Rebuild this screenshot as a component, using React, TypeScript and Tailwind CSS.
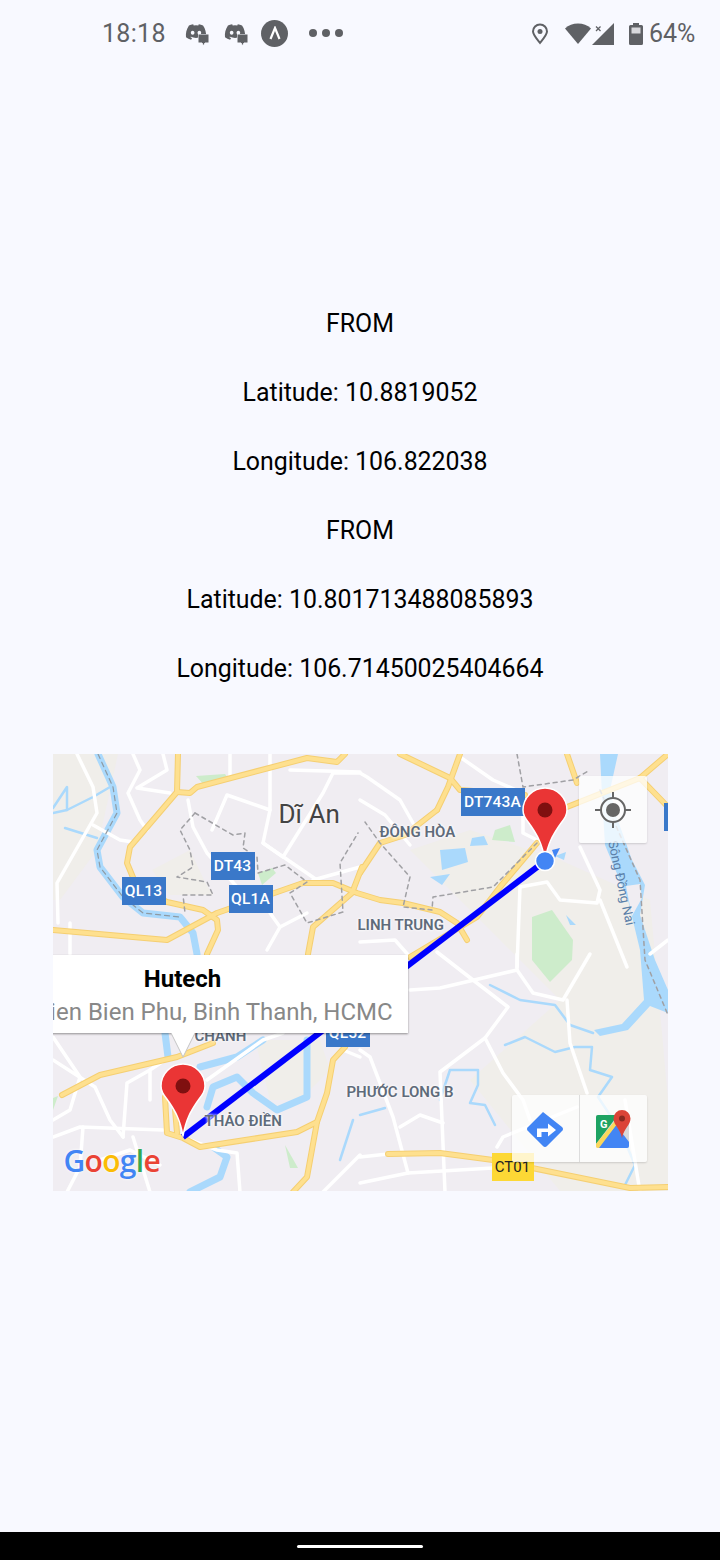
import { FaDiscord } from "react-icons/fa";

const lines = [
  "FROM",
  "Latitude: 10.8819052",
  "Longitude: 106.822038",
  "FROM",
  "Latitude: 10.801713488085893",
  "Longitude: 106.71450025404664",
];

// all map drawing uses page coordinates through the viewBox
const yellowRoads = [
  "178,754 177,792 130,847 127,863 137,887 167,902 203,910 217,920 218,930 207,954",
  "177,792 190,793 197,787 307,758 337,762 345,754",
  "53,930 167,940 217,913 303,883 333,883 357,893 380,900 403,903 440,912 457,923 467,940",
  "362,867 352,893 313,927 308,954",
  "400,754 450,778 460,790 525,795",
  "460,754 448,787 437,810",
  "360,873 380,843 405,835 437,810",
  "537,843 500,887 477,917 410,957",
  "567,754 577,783",
  "567,807 640,778 668,754",
  "640,778 668,807",
  "62,1095 100,1075 177,1057 213,1043",
  "165,1097 167,1133 183,1138 200,1147 297,1132 317,1122 327,1093 333,1060 345,1047",
  "174,1097 177,1133",
  "317,1122 307,1177 293,1192",
  "388,1154 440,1153 493,1160 630,1188 668,1187",
];

const whiteRoads = [
  "77,754 93,787 97,813 57,883 58,923",
  "93,825 120,840 133,842",
  "133,754 140,770 128,793 140,820 147,830",
  "163,754 167,770 137,788 170,793",
  "188,800 193,827 207,853 237,887",
  "212,830 227,795 270,810 270,754",
  "230,754 230,777",
  "270,810 263,843 317,880",
  "263,843 283,857 323,793 333,773 360,773 367,777 400,800 413,823",
  "290,770 360,772",
  "270,913 280,927 267,950",
  "280,927 307,913",
  "360,867 313,880",
  "70,923 70,954",
  "460,757 493,780 523,793 523,833 537,840",
  "517,967 520,887 547,882 560,900 597,903 600,890 580,847",
  "600,900 627,967",
  "360,942 395,940 410,957",
  "360,800 385,815 410,845",
  "437,952 473,980 508,1007 485,1038 440,1072 445,1192",
  "410,990 440,988 517,970 517,954",
  "517,970 533,993 563,1000 590,954",
  "567,1000 570,1043 587,1093",
  "485,1038 503,1073 523,1100 530,1120",
  "497,1147 503,1137 577,1107",
  "360,1157 388,1154",
  "360,1050 370,1057 393,1117 408,1173 493,1168",
  "400,1127 420,1115 443,1123",
  "408,1173 360,1183",
  "53,1037 80,1077 70,1110 53,1120",
  "53,1137 80,1127 163,1130",
  "53,1060 95,1087 110,1120 123,1137",
  "123,1137 127,1083 150,1070",
  "133,1137 150,1192",
  "67,1192 80,1167 83,1127",
  "100,1160 130,1150 160,1165",
  "150,1100 150,1070 165,1060",
  "190,1140 217,1150 237,1153 240,1192",
  "207,1080 263,1040 283,1033",
  "323,1192 360,1155",
  "343,1050 360,1057",
  "650,954 668,940",
  "625,1100 640,1192",
];

const boundaries = [
  "195,813 180,830 190,850 193,867 177,877 207,882 213,895 183,895 185,913",
  "195,813 233,835 245,833 243,848 257,857 258,873 285,865 307,882 290,893 307,923 343,912 340,863 358,833",
  "517,754 523,787 573,780 590,770",
  "537,843 493,887 433,897 432,910 403,907 410,877 380,843 365,822",
  "600,790 640,880 645,960 668,1015",
];

const rivers = [
  "98,754 113,787 117,813 97,850 100,867 123,897 143,913 180,917 193,933 197,954",
  "165,1033 168,1057",
  "207,1107 213,1087 237,1077 253,1093 277,1110 307,1097 307,1040",
  "200,1067 237,1057 263,1040",
  "213,1147 227,1157 220,1177 190,1192",
];

const streams = [
  "53,808 67,787 67,810 53,813",
  "67,810 93,797 110,787",
  "65,828 97,838",
  "490,985 520,1000 555,1005 570,1025 593,1033",
  "505,1045 525,1037 555,1052 575,1047 592,1047 590,1070 612,1077 598,1097 620,1130 635,1165 625,1185",
  "440,1100 450,1070 478,1070 478,1085 470,1103 485,1105 495,1125",
  "360,1115 385,1108",
  "353,1120 340,1160",
];

function Pin({ x, y }: { x: number; y: number }) {
  return (
    <g transform={`translate(${x} ${y})`}>
      <path
        d="M0 72C-3 55-8 47-14 38-19 31-22 28-22 22A22 22 0 0 1 22 22C22 28 19 31 14 38 8 47 3 55 0 72Z"
        fill="#ea3535"
        stroke="#ffffff"
        strokeWidth="1.5"
      />
      <circle cx="0" cy="22" r="7.5" fill="#7f1010" />
    </g>
  );
}

function MapDrawing() {
  return (
    <svg viewBox="53 754 615 437" className="absolute inset-0 h-full w-full" fill="none" strokeLinejoin="round" strokeLinecap="round">
      <rect x="53" y="754" width="615" height="437" fill="#f0edf2" />
      {/* land patches */}
      <path d="M53 754H118L97 850 60 900H53Z" fill="#f0eeea" />
      <path d="M152 870 190 850 205 882 213 895 170 895Z" fill="#f0eeea" />
      <path d="M410 850 470 830 560 860 650 900 668 1100V1191H560L470 1080 560 1000 500 940Z" fill="#f0eeea" />
      <path d="M255 1040 320 1040 330 1070 300 1100 270 1100Z" fill="#f0eeea" />
      {/* greens */}
      <path d="M196 776 225 774 228 778 205 786Z" fill="#cdeccb" />
      <path d="M258 873 272 868 276 873 262 885Z" fill="#cdeccb" />
      <path d="M532 917 552 910 573 940 572 960 550 982 532 960Z" fill="#cdeccb" />
      <path d="M495 830 510 825 515 842 492 840Z" fill="#cdeccb" />
      <path d="M285 1145 298 1168H290Z" fill="#cdeccb" />
      <path d="M53 1098 58 1096 53 1110Z" fill="#cdeccb" />
      {/* water */}
      {rivers.map((r) => (
        <polyline key={r} points={r} stroke="#aad9fc" strokeWidth="7" />
      ))}
      {streams.map((r) => (
        <polyline key={r} points={r} stroke="#aad9fc" strokeWidth="2.5" />
      ))}
      <path
        d="M600 754H618L610 790 616 815 632 860 645 885 640 915 655 960 668 990V1013L650 1006 628 1030 600 1036 594 1030 622 1024 644 1000 640 950 628 900 605 845 602 795Z"
        fill="#aad9fc"
      />
      <path d="M626 886 640 884 642 898 632 916Z" fill="#f0edf2" />
      <path d="M440 850 465 848 468 862 442 870Z M472 838 484 836 488 845 470 846Z M430 877 450 874 442 885Z M566 915 576 925 570 925Z M555 856 566 852 564 860Z" fill="#aad9fc" />
      {/* roads */}
      {whiteRoads.map((r) => (
        <polyline key={r} points={r} stroke="#ffffff" strokeWidth="3.5" />
      ))}
      {yellowRoads.map((r) => (
        <polyline key={r} points={r} stroke="#f5cf72" strokeWidth="6" />
      ))}
      {yellowRoads.map((r) => (
        <polyline key={r} points={r} stroke="#fee08f" strokeWidth="4" />
      ))}
      {boundaries.map((r) => (
        <polyline key={r} points={r} stroke="#a0a0a4" strokeWidth="1.5" strokeDasharray="4 4" />
      ))}
      <polyline points="98,754 113,787 117,813 97,850 100,867 123,897 143,913 180,917" stroke="#8f9aa3" strokeWidth="1.2" strokeDasharray="5 4" />
      {/* route */}
      <line x1="545" y1="861" x2="183" y2="1137" stroke="#0000ff" strokeWidth="6" strokeLinecap="butt" />
      <Pin x={183} y={1064} />
      <path d="M552 850 560 848 555 858Z" fill="#4285f4" />
    </svg>
  );
}

function Shield({ text, className }: { text: string; className: string }) {
  return (
    <div className={`absolute flex h-[28px] items-center justify-center bg-[#3a78c9] pt-[1px] text-[15.5px] font-medium tracking-[0.2px] text-white ${className}`}>
      {text}
    </div>
  );
}

function PlaceLabel({ text, className }: { text: string; className: string }) {
  return (
    <div className={`absolute text-[15px] font-semibold leading-[18px] whitespace-nowrap text-[#5f6b7a] [text-shadow:0_0_3px_white,0_0_3px_white] ${className}`}>
      {text}
    </div>
  );
}

function Callout() {
  return (
    <div className="absolute left-[-95px] top-[201px] w-[450px]">
      <div className="flex h-[78px] flex-col items-center bg-white pt-[9px] shadow-[0_1px_2px_rgba(0,0,0,0.4)]">
        <div className="text-[24px] leading-[30px] font-bold text-black">Hutech</div>
        <div className="mt-[2px] text-[24px] leading-[32px] whitespace-nowrap text-[#888888]">475A Dien Bien Phu, Binh Thanh, HCMC</div>
      </div>
      <svg width="24" height="25" viewBox="0 0 24 25" className="mx-auto block">
        <path d="M0 0H24L12 24Z" fill="#ffffff" />
        <path d="M0 0L12 24 24 0" fill="none" stroke="#c4c4c4" strokeWidth="1" />
      </svg>
    </div>
  );
}

function GoogleLogo() {
  return (
    <div className="absolute left-[11px] top-[388px] flex font-['Open_Sans',sans-serif] text-[30px] leading-[38px] font-semibold tracking-[-0.7px] [text-shadow:0_0_3px_white]">
      <span className="text-[#4285f4]">G</span>
      <span className="text-[#ea4335]">o</span>
      <span className="text-[#fbbc05]">o</span>
      <span className="text-[#4285f4]">g</span>
      <span className="text-[#34a853]">l</span>
      <span className="text-[#ea4335]">e</span>
    </div>
  );
}

function MapControls() {
  return (
    <>
      <div className="absolute left-[526px] top-[22px] flex h-[67px] w-[68px] items-center justify-center rounded-[2px] bg-white/75 shadow-[0_1px_2px_rgba(0,0,0,0.15)]">
        <svg width="40" height="40" viewBox="0 0 40 40" fill="none" stroke="#666666" strokeWidth="2">
          <circle cx="20" cy="20" r="12" fill="#ffffff" fillOpacity="0.5" />
          <circle cx="20" cy="20" r="7" fill="#666666" stroke="none" />
          <path d="M20 2V8M20 32V38M2 20H8M32 20H38" />
        </svg>
      </div>
      <div className="absolute left-[459px] top-[341px] flex h-[67px] w-[135px] rounded-[2px] bg-white/75 shadow-[0_1px_2px_rgba(0,0,0,0.15)]">
        <div className="flex w-[68px] items-center justify-center border-r border-[#dddddd]">
          <svg width="38" height="38" viewBox="0 0 38 38">
            <path d="M17 2 36 17a2.5 2.5 0 0 1 0 4L21 36a2.500 2.500 0 0 1-4 0L2 21a2.500 2.500 0 0 1 0-4L17 2Z" fill="#4285f4" />
            <path d="M11 27V18.500H22V13.500L30 20 22 26.500V22H15.500V27Z" fill="#ffffff" />
          </svg>
        </div>
        <div className="flex flex-1 items-center justify-center">
          <svg width="36" height="38" viewBox="0 0 36 38">
            <rect x="1" y="5" width="33" height="33" rx="2" fill="#d9d9d9" />
            <path d="M1 34V7a2 2 0 0 1 2-2H23L1 34Z" fill="#1ea362" />
            <path d="M3 38 21 15 34 32V36a2 2 0 0 1-2 2Z" fill="#4285f4" />
            <path d="M1 34 23 7 25 10 4 38H3A2 2 0 0 1 1 36Z" fill="#fbd75b" />
            <path d="M27 0a8.500 8.500 0 0 1 8.500 8.500C35.500 15 29 18 27 28 25 18 18.500 15 18.500 8.500A8.500 8.500 0 0 1 27 0Z" fill="#db4437" />
            <circle cx="27" cy="8.500" r="3" fill="#8a2a20" />
            <text x="5" y="18" fontSize="11" fontWeight="700" fill="#ffffff" fontFamily="Roboto, sans-serif">G</text>
          </svg>
        </div>
      </div>
    </>
  );
}

function StatusIcons() {
  return (
    <div className="flex items-center text-[#5f6165]">
      <svg width="18" height="22" viewBox="0 0 18 22" className="ml-[531px]" fill="none" stroke="currentColor" strokeWidth="2">
        <path d="M9 20C5 15 2 11.500 2 8.500a7 7 0 0 1 14 0C16 11.500 13 15 9 20Z" />
        <circle cx="9" cy="8.500" r="2.500" fill="currentColor" stroke="none" />
      </svg>
      <svg width="50" height="24" viewBox="0 0 50 24" className="ml-[16px]" fill="currentColor">
        <path d="M0 6.500C3.500 3 8 1.500 13 1.500S22.500 3 26 6.500L13 22Z" />
        <path d="M49 1V23H27Z" />
        <path d="M31 4.500 35.500 9M35.500 4.500 31 9" stroke="currentColor" strokeWidth="1.300" />
      </svg>
      <svg width="14" height="22" viewBox="0 0 14 22" className="ml-[14px]" fill="currentColor">
        <path d="M4 0H10V2H12.500A1.500 1.500 0 0 1 14 3.500V20.500A1.500 1.500 0 0 1 12.500 22H1.500A1.500 1.500 0 0 1 0 20.500V3.500A1.500 1.500 0 0 1 1.500 2H4Z" />
        <rect x="2.500" y="4.500" width="9" height="6" fill="#d8d8dc" />
      </svg>
    </div>
  );
}

function ChatBadge() {
  return (
    <div className="relative h-[24px] w-[24px]">
      <FaDiscord className="h-[22px] w-[22px]" />
      <svg width="11" height="12" viewBox="0 0 11 12" className="absolute bottom-[-1px] right-[0px]">
        <path d="M0 0H11V9H7L5.500 12 4 9H0Z" fill="#5f6165" stroke="#f8f9ff" strokeWidth="1" />
      </svg>
    </div>
  );
}

function StatusBar() {
  return (
    <div className="relative flex h-[66px] items-center text-[#5f6165]">
      <span className="ml-[102px] w-[63px] pt-[1px] text-[25px] leading-[28px] tracking-[0.3px]">18:18</span>
      <div className="ml-[20px] flex gap-[15px]">
        <ChatBadge />
        <ChatBadge />
      </div>
      <div className="ml-[13px] flex h-[27px] w-[27px] items-center justify-center rounded-full bg-[#5f6165]">
        <svg width="14" height="14" viewBox="0 0 14 14" fill="none" stroke="#ffffff" strokeWidth="2.200">
          <path d="M2.500 13 7 2l4.500 11" />
        </svg>
      </div>
      <div className="ml-[21px] flex gap-[5px]">
        <div className="h-[8px] w-[8px] rounded-full bg-[#5f6165]" />
        <div className="h-[8px] w-[8px] rounded-full bg-[#5f6165]" />
        <div className="h-[8px] w-[8px] rounded-full bg-[#5f6165]" />
      </div>
      <div className="absolute left-0 top-[22px]">
        <StatusIcons />
      </div>
      <span className="absolute left-[649px] top-[20px] text-[25px] leading-[28px]">64%</span>
    </div>
  );
}

export default function App() {
  return (
    <div className="flex h-[1560px] w-[720px] flex-col overflow-hidden bg-[#f8f9ff] font-['Roboto',sans-serif]">
      <StatusBar />
      <main className="flex flex-1 flex-col items-center pt-[244px]">
        <div className="flex flex-col items-center gap-[41px]">
          {lines.map((line, i) => (
            <p key={i} className="text-[24.9px] leading-[28px] text-black">
              {line}
            </p>
          ))}
        </div>
        <div className="relative mt-[71px] h-[437px] w-[615px] overflow-hidden">
          <MapDrawing />
          <div className="absolute left-[226px] top-[43px] text-[26px] leading-[34px] text-[#444444] [text-shadow:0_0_3px_white]">Dĩ An</div>
          <PlaceLabel text="ĐÔNG HÒA" className="left-[327px] top-[69px]" />
          <PlaceLabel text="LINH TRUNG" className="left-[305px] top-[162px]" />
          <PlaceLabel text="CHÁNH" className="left-[142px] top-[273px]" />
          <PlaceLabel text="THẢO ĐIỀN" className="left-[152px] top-[358px]" />
          <PlaceLabel text="PHƯỚC LONG B" className="left-[294px] top-[329px]" />
          <div className="absolute left-[520px] top-[121px] w-[96px] rotate-[78deg] text-center text-[13px] leading-[16px] whitespace-nowrap text-[#5a7fa8]">Sông Đồng Nai</div>
          <Shield text="QL13" className="left-[69px] top-[123px] w-[44px]" />
          <Shield text="DT43" className="left-[158px] top-[98px] w-[44px]" />
          <Shield text="QL1A" className="left-[176px] top-[131px] w-[44px]" />
          <Shield text="QL52" className="left-[273px] top-[265px] w-[44px]" />
          <Shield text="" className="left-[611px] top-[49px] w-[4px]" />
          <div className="absolute left-[439px] top-[399px] flex h-[28px] w-[42px] items-center justify-center bg-[#fdd835] text-[15px] text-[#222222]">CT01</div>
          <GoogleLogo />
          <MapControls />
          <Callout />
          <Shield text="DT743A" className="left-[408px] top-[34px] w-[64px]" />
          <svg viewBox="53 754 615 437" className="pointer-events-none absolute inset-0 h-full w-full">
            <Pin x={545} y={788} />
            <circle cx="545" cy="861" r="9.500" fill="#4285f4" stroke="#ffffff" strokeWidth="1.500" />
          </svg>
        </div>
      </main>
      <div className="flex h-[28px] items-center justify-center bg-black">
        <div className="h-[3px] w-[126px] rounded-full bg-white" />
      </div>
    </div>
  );
}
